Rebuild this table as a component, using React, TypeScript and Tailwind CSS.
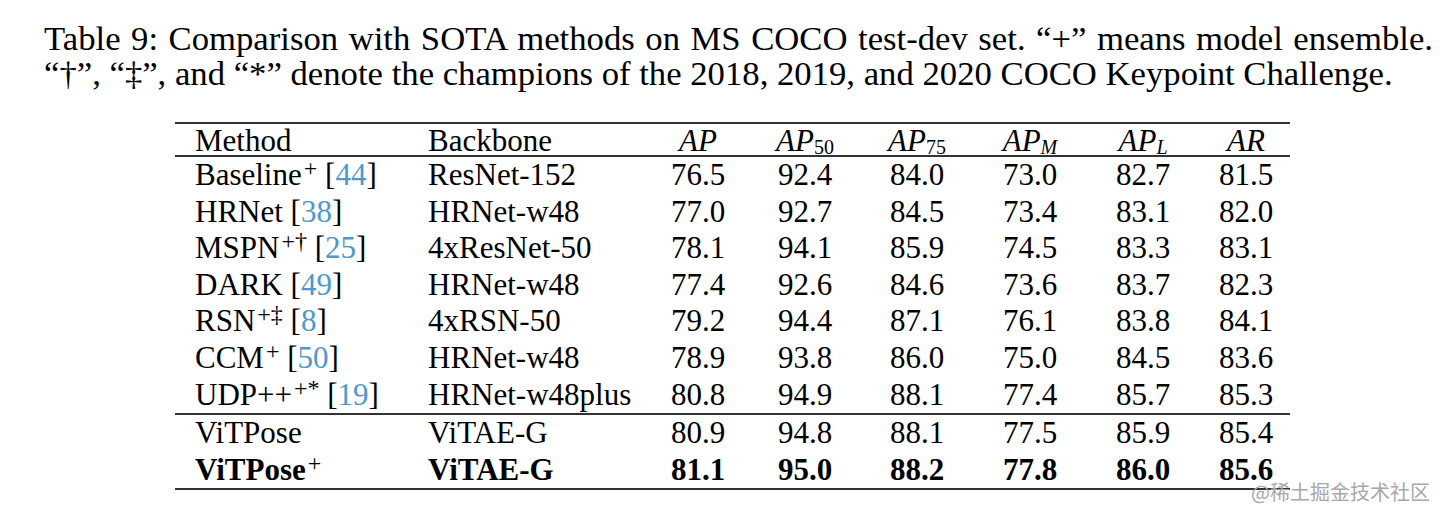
import React from "react";

const cite = "text-[#4f97cf]";

type Row = { m: React.ReactNode; b: string; v: string[]; bold?: boolean };

const Sup = ({ children }: { children: React.ReactNode }) => (
  <sup className="text-[24px] font-normal relative top-[-9px] ml-[2px] align-baseline leading-none">{children}</sup>
);

const rows: Row[] = [
  { m: <>Baseline<Sup>+</Sup> [<span className={cite}>44</span>]</>, b: "ResNet-152", v: ["76.5", "92.4", "84.0", "73.0", "82.7", "81.5"] },
  { m: <>HRNet [<span className={cite}>38</span>]</>, b: "HRNet-w48", v: ["77.0", "92.7", "84.5", "73.4", "83.1", "82.0"] },
  { m: <>MSPN<Sup>+†</Sup> [<span className={cite}>25</span>]</>, b: "4xResNet-50", v: ["78.1", "94.1", "85.9", "74.5", "83.3", "83.1"] },
  { m: <>DARK [<span className={cite}>49</span>]</>, b: "HRNet-w48", v: ["77.4", "92.6", "84.6", "73.6", "83.7", "82.3"] },
  { m: <>RSN<Sup>+‡</Sup> [<span className={cite}>8</span>]</>, b: "4xRSN-50", v: ["79.2", "94.4", "87.1", "76.1", "83.8", "84.1"] },
  { m: <>CCM<Sup>+</Sup> [<span className={cite}>50</span>]</>, b: "HRNet-w48", v: ["78.9", "93.8", "86.0", "75.0", "84.5", "83.6"] },
  { m: <>UDP++<Sup>+*</Sup> [<span className={cite}>19</span>]</>, b: "HRNet-w48plus", v: ["80.8", "94.9", "88.1", "77.4", "85.7", "85.3"] },
];

const rows2: Row[] = [
  { m: <>ViTPose</>, b: "ViTAE-G", v: ["80.9", "94.8", "88.1", "77.5", "85.9", "85.4"] },
  { m: <>ViTPose<Sup>+</Sup></>, b: "ViTAE-G", v: ["81.1", "95.0", "88.2", "77.8", "86.0", "85.6"], bold: true },
];

const grid = "grid grid-cols-[233px_242px_96px_118px_106px_120px_106px_94px] items-baseline";

const Sub = ({ children, it }: { children: React.ReactNode; it?: boolean }) => (
  <sub className={`text-[20px] relative top-[3px] align-baseline leading-none ${it ? "italic" : "not-italic"}`}>{children}</sub>
);

function DataRow({ r }: { r: Row }) {
  return (
    <div className={`${grid} h-[36.6px] leading-[36.6px] ${r.bold ? "font-bold" : ""}`}>
      <div className="pl-[20px] whitespace-nowrap">{r.m}</div>
      <div className="pl-[20px] whitespace-nowrap">{r.b}</div>
      {r.v.map((x, i) => (
        <div key={i} className={`text-center ${i === 5 ? "pl-[6px]" : ""}`}>{x}</div>
      ))}
    </div>
  );
}

export default function App() {
  return (
    <div className="w-[1440px] h-[518px] bg-white relative overflow-hidden text-black font-['Liberation_Serif',serif]">
      <div className="pt-[21px] ml-[44px] w-[1389px] text-[34.7px] leading-[35px] whitespace-nowrap">
        <div className="text-justify [text-align-last:justify] whitespace-normal">Table 9: Comparison with SOTA methods on MS COCO test-dev set. “+” means model ensemble.</div>
        <div>“†”, “‡”, and “*” denote the champions of the 2018, 2019, and 2020 COCO Keypoint Challenge.</div>
      </div>
      <div className="ml-[175px] w-[1115px] mt-[31px] border-t-2 border-b-2 border-[#333] text-[31px]">
        <div className={`${grid} h-[33px] leading-[33px] border-b-2 border-[#333]`}>
          <div className="pl-[20px]">Method</div>
          <div className="pl-[20px]">Backbone</div>
          <div className="text-center italic">AP</div>
          <div className="text-center"><span className="italic">AP</span><Sub>50</Sub></div>
          <div className="text-center"><span className="italic">AP</span><Sub>75</Sub></div>
          <div className="text-center"><span className="italic">AP</span><Sub it>M</Sub></div>
          <div className="text-center"><span className="italic">AP</span><Sub it>L</Sub></div>
          <div className="text-center italic pl-[6px]">AR</div>
        </div>
        <div>
          {rows.map((r, i) => (
            <DataRow key={i} r={r} />
          ))}
        </div>
        <div className="border-t-2 border-[#333]">
          {rows2.map((r, i) => (
            <DataRow key={i} r={r} />
          ))}
        </div>
      </div>
      <div className="absolute right-[10px] top-[478px] text-[20px] leading-[28px] text-[#a8a8a8] font-['Noto_Sans_CJK_SC',sans-serif]">
        @稀土掘金技术社区
      </div>
    </div>
  );
}
